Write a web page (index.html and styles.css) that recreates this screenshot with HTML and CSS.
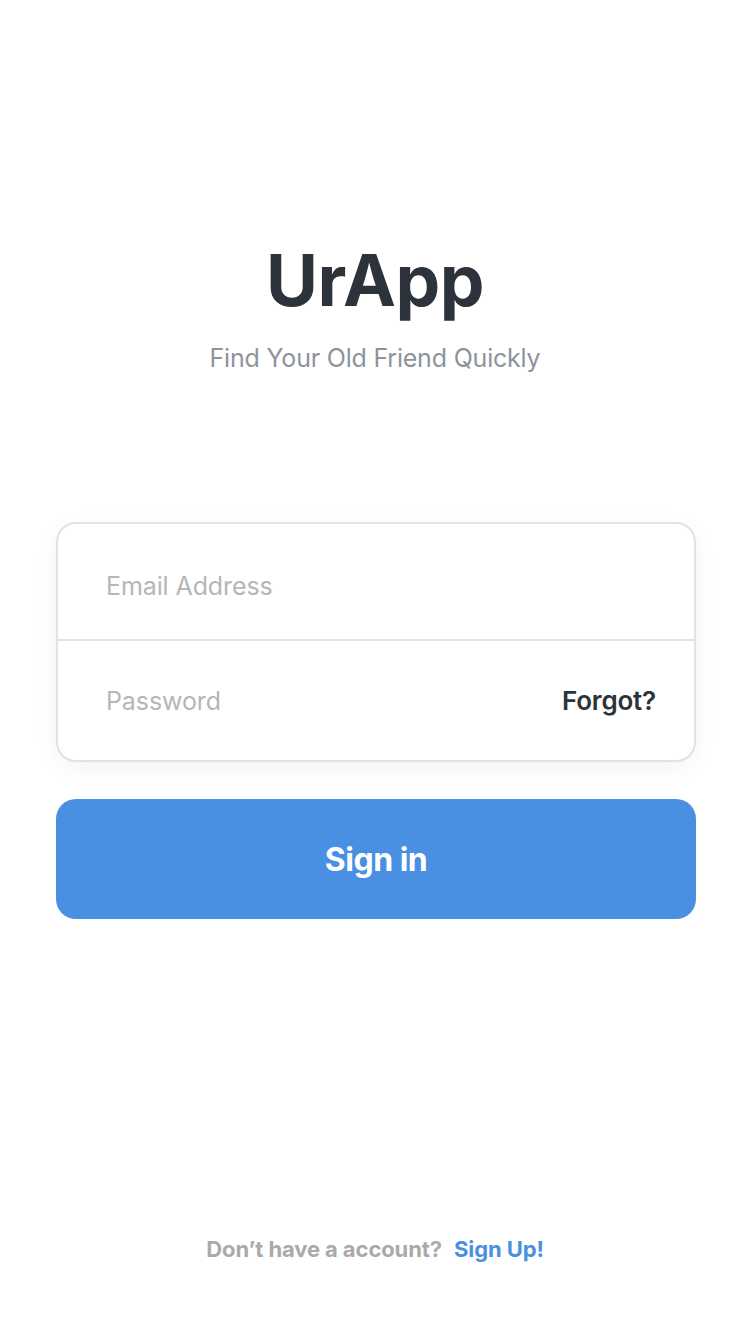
FILE: index.html
```html
<!DOCTYPE html>
<html>
<head>
<meta charset="utf-8">
<link rel="stylesheet" href="styles.css">
</head>
<body>
<div class="screen">
  <header class="brand">
    <h1 class="title">UrApp</h1>
    <p class="subtitle">Find Your Old Friend Quickly</p>
  </header>
  <form class="form">
    <div class="card">
      <div class="field field-first"><span class="placeholder">Email Address</span></div>
      <div class="field field-last"><span class="placeholder">Password</span><span class="forgot">Forgot?</span></div>
    </div>
    <button type="button" class="btn">Sign in</button>
  </form>
  <footer class="footer">
    <span class="muted">Don’t have a account?</span><span class="link">Sign Up!</span>
  </footer>
</div>
</body>
</html>
```
FILE: styles.css
```css
* { box-sizing: border-box; }
html, body { margin: 0; padding: 0; background: #fff; }
body { font-family: Inter, "Noto Sans", sans-serif; }
.screen {
  width: 750px;
  height: 1334px;
  display: flex;
  flex-direction: column;
  align-items: center;
}
.brand {
  margin-top: 237px;
  display: flex;
  flex-direction: column;
  align-items: center;
}
.title {
  margin: 0;
  font-size: 71px;
  line-height: 86px;
  font-weight: 700;
  color: #2c333b;
  letter-spacing: -0.5px;
}
.subtitle {
  margin: 18px 0 0;
  font-size: 25px;
  line-height: 34px;
  color: #8e939a;
  font-weight: 400;
  letter-spacing: -0.2px;
}
.form {
  margin-top: 147px;
  width: 640px;
  margin-left: 2px;
  display: flex;
  flex-direction: column;
  gap: 37px;
}
.card {
  border: 2px solid #e2e2e2;
  border-radius: 20px;
  background: #fff;
  box-shadow: 0 6px 24px rgba(0,0,0,0.05);
  display: flex;
  flex-direction: column;
}
.field {
  height: 117px;
  display: flex;
  align-items: center;
  justify-content: space-between;
  padding: 0 38px 0 48px;
  border-bottom: 2px solid #e2e2e2;
}
.field-first { padding-top: 8px; }
.field-last { border-bottom: none; height: 119px; }
.placeholder {
  font-size: 25px;
  color: #b6b6b6;
  letter-spacing: -0.1px;
}
.forgot {
  font-size: 26px;
  font-weight: 600;
  color: #2c333b;
  letter-spacing: -0.2px;
}
.btn {
  height: 120px;
  border: none;
  border-radius: 20px;
  background: #4a90e2;
  color: #fff;
  font-family: Inter, "Noto Sans", sans-serif;
  font-size: 32px;
  font-weight: 700;
  letter-spacing: -0.5px;
  padding: 0;
  cursor: pointer;
}
.footer {
  margin-top: auto;
  margin-bottom: 72px;
  font-size: 22px;
  font-weight: 700;
  letter-spacing: -0.1px;
  display: flex;
  gap: 12px;
}
.muted { color: #aaaaaa; }
.link { color: #4a90e2; }
```
